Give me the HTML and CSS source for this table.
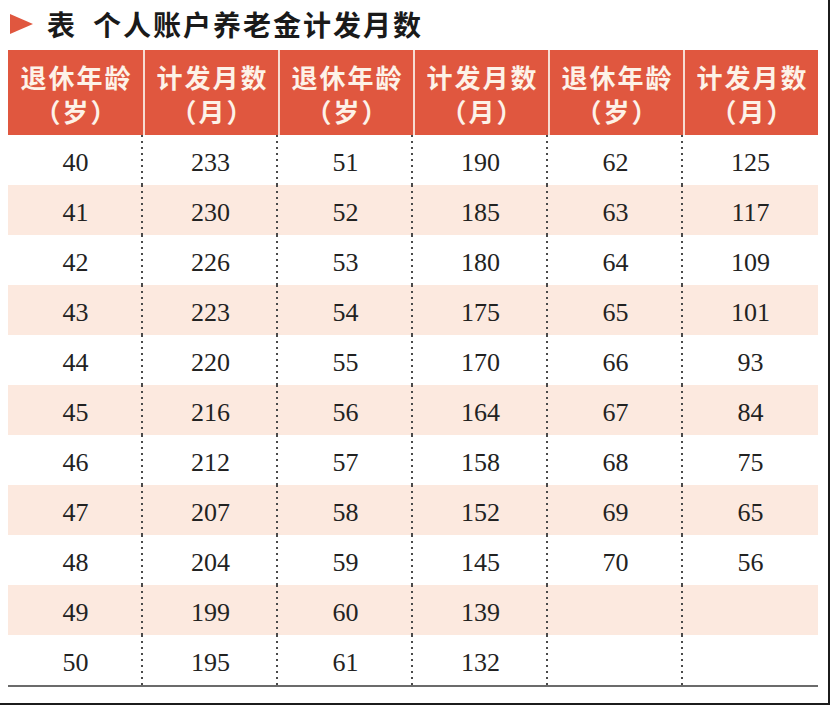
FILE: index.html
```html
<!DOCTYPE html>
<html lang="zh">
<head>
<meta charset="utf-8">
<link rel="stylesheet" href="styles.css">
</head>
<body>
<div class="page">
  <div class="title">
    <svg class="tri" width="23" height="20" viewBox="0 0 23 20"><polygon points="0,0 23,10 0,20" fill="#e0573f"/></svg>
    <span class="t1">表</span>
    <span class="t2">个人账户养老金计发月数</span>
  </div>
  <div class="grid">
    <div class="th"><span>退休年龄</span><span>（岁）</span></div>
    <div class="th"><span>计发月数</span><span>（月）</span></div>
    <div class="th"><span>退休年龄</span><span>（岁）</span></div>
    <div class="th"><span>计发月数</span><span>（月）</span></div>
    <div class="th"><span>退休年龄</span><span>（岁）</span></div>
    <div class="th"><span>计发月数</span><span>（月）</span></div>

    <div class="td">40</div><div class="td">233</div><div class="td">51</div><div class="td">190</div><div class="td">62</div><div class="td last">125</div>
    <div class="td s">41</div><div class="td s">230</div><div class="td s">52</div><div class="td s">185</div><div class="td s">63</div><div class="td s last">117</div>
    <div class="td">42</div><div class="td">226</div><div class="td">53</div><div class="td">180</div><div class="td">64</div><div class="td last">109</div>
    <div class="td s">43</div><div class="td s">223</div><div class="td s">54</div><div class="td s">175</div><div class="td s">65</div><div class="td s last">101</div>
    <div class="td">44</div><div class="td">220</div><div class="td">55</div><div class="td">170</div><div class="td">66</div><div class="td last">93</div>
    <div class="td s">45</div><div class="td s">216</div><div class="td s">56</div><div class="td s">164</div><div class="td s">67</div><div class="td s last">84</div>
    <div class="td">46</div><div class="td">212</div><div class="td">57</div><div class="td">158</div><div class="td">68</div><div class="td last">75</div>
    <div class="td s">47</div><div class="td s">207</div><div class="td s">58</div><div class="td s">152</div><div class="td s">69</div><div class="td s last">65</div>
    <div class="td">48</div><div class="td">204</div><div class="td">59</div><div class="td">145</div><div class="td">70</div><div class="td last">56</div>
    <div class="td s">49</div><div class="td s">199</div><div class="td s">60</div><div class="td s">139</div><div class="td s"></div><div class="td s last"></div>
    <div class="td">50</div><div class="td">195</div><div class="td">61</div><div class="td">132</div><div class="td"></div><div class="td last"></div>
  </div>
</div>
</body>
</html>
```
FILE: styles.css
```css
html, body {
  margin: 0;
  padding: 0;
  background: #ffffff;
}

.page {
  width: 828px;
  height: 703px;
  border-right: 2px solid #1c1c1c;
  border-bottom: 2px solid #1c1c1c;
  background: #ffffff;
}

.title {
  height: 50px;
  display: flex;
  align-items: center;
  padding-left: 10px;
  font-family: "Noto Sans CJK SC", "Noto Sans", sans-serif;
  font-weight: 700;
  font-size: 28px;
  color: #1a1a1a;
  letter-spacing: 2px;
  box-sizing: border-box;
  padding-bottom: 2px;
}

.tri {
  display: block;
  margin-right: 14px;
  margin-top: 0;
}

.t1 {
  margin-right: 16px;
}

.grid {
  margin-left: 8px;
  width: 810px;
  display: grid;
  grid-template-columns: repeat(6, 135px);
  border-bottom: 2px solid #6b6b6b;
}

.th {
  height: 85px;
  background: #e0573f;
  color: #fdf2e8;
  font-family: "Noto Sans CJK SC", "Noto Sans", sans-serif;
  font-weight: 700;
  font-size: 26px;
  letter-spacing: 2px;
  line-height: 34px;
  display: flex;
  flex-direction: column;
  align-items: center;
  justify-content: center;
  padding-left: 2px;
  padding-top: 3px;
  box-sizing: border-box;
}

.th + .th {
  border-left: 2px solid #f7dcd2;
}

.td {
  height: 50px;
  line-height: 50px;
  text-align: center;
  font-family: "Liberation Serif", "DejaVu Serif", serif;
  font-size: 26px;
  color: #222222;
  padding-top: 3px;
  box-sizing: border-box;
  background-image: linear-gradient(to bottom, #4a4a4a 0 2px, transparent 2px 6px);
  background-size: 2px 6px;
  background-repeat: repeat-y;
  background-position: right top;
}

.td.s {
  background-color: #fce9df;
}

.td.last {
  background-image: none;
}
```
